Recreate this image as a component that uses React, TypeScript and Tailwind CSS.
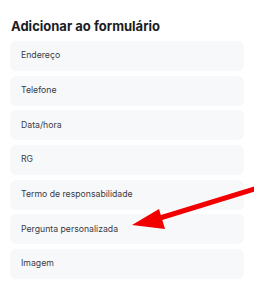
import React from "react";

const items = [
  "Endereço",
  "Telefone",
  "Data/hora",
  "RG",
  "Termo de responsabilidade",
  "Pergunta personalizada",
  "Imagem",
];

export default function App() {
  return (
    <div
      className="relative w-[254px] h-[296px] bg-white overflow-hidden"
      style={{ fontFamily: "Inter, 'Noto Sans', sans-serif" }}
    >
      <div className="pt-[19px] pl-[10px] pr-[10.5px]">
        <h2 className="pl-[1px] text-[13px] leading-[14px] font-bold text-[#1c1c24]">
          Adicionar ao formulário
        </h2>
        <div className="mt-[8px] flex flex-col gap-[4.67px]">
          {items.map((t) => (
            <div
              key={t}
              className="h-[30px] rounded-[6px] bg-[#f7f8fa] flex items-center pl-[11px] text-[8.7px] text-[#3a3a44]"
            >
              {t}
            </div>
          ))}
        </div>
      </div>
      <svg
        className="absolute left-0 top-0 pointer-events-none"
        width="254"
        height="296"
        viewBox="0 0 254 296"
      >
        <line x1="258" y1="188" x2="160" y2="218" stroke="#f20000" strokeWidth="5" />
        <polygon points="132,225 159,209 165,229" fill="#f20000" />
      </svg>
    </div>
  );
}
